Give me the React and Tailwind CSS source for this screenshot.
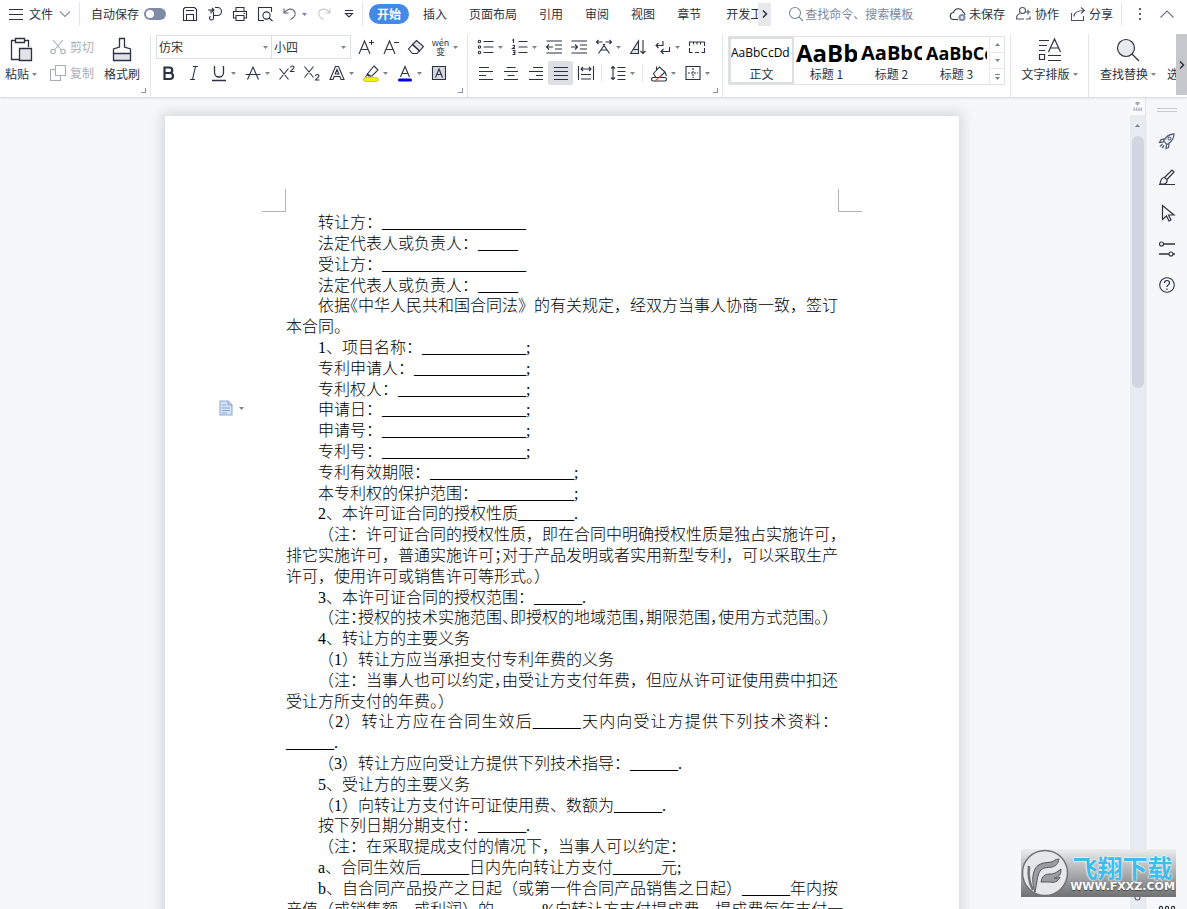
import { clsx } from 'clsx';

const MENU_TABS = ['插入', '页面布局', '引用', '审阅', '视图', '章节'];

const STYLES = [
  { sample: 'AaBbCcDd', label: '正文', cls: 'text-[12px]', active: true },
  { sample: 'AaBb', label: '标题 1', cls: 'text-[24px] font-bold' },
  { sample: 'AaBbC', label: '标题 2', cls: 'text-[20px] font-bold' },
  { sample: 'AaBbCc', label: '标题 3', cls: 'text-[18px] font-bold' },
];

// "~" marks a punctuation sign that is set half width, indent: false continues the paragraph
const LINES = [
  { text: '转让方：__________________' },
  { text: '法定代表人或负责人：_____' },
  { text: '受让方：__________________' },
  { text: '法定代表人或负责人：_____' },
  { text: '依据~《中华人民共和国合同法》的有关规定，经双方当事人协商一致，签订' },
  { text: '本合同。', indent: false },
  { text: '1、项目名称：_____________;' },
  { text: '专利申请人：______________;' },
  { text: '专利权人：________________;' },
  { text: '申请日：__________________;' },
  { text: '申请号：__________________;' },
  { text: '专利号：__________________;' },
  { text: '专利有效期限：__________________;' },
  { text: '本专利权的保护范围：____________;' },
  { text: '2、本许可证合同的授权性质_______.' },
  { text: '（注：许可证合同的授权性质，即在合同中明确授权性质是独占实施许可，' },
  { text: '排它实施许可，普通实施许可~；对于产品发明或者实用新型专利，可以采取生产', indent: false },
  { text: '许可，使用许可或销售许可等形式~。）', indent: false },
  { text: '3、本许可证合同的授权范围：______.' },
  { text: '（注~：授权的技术实施范围~、即授权的地域范围~，期限范围~，使用方式范围~。）' },
  { text: '4、转让方的主要义务' },
  { text: '（1）转让方应当承担支付专利年费的义务' },
  { text: '（注：当事人也可以约定~，由受让方支付年费，但应从许可证使用费中扣还' },
  { text: '受让方所支付的年费~。）', indent: false },
  { text: '（2）转让方应在合同生效后______天内向受让方提供下列技术资料：', justify: true },
  { text: '______.', indent: false },
  { text: '（3）转让方应向受让方提供下列技术指导：______.' },
  { text: '5、受让方的主要义务' },
  { text: '（1）向转让方支付许可证使用费、数额为______.' },
  { text: '按下列日期分期支付：______.' },
  { text: '（注：在采取提成支付的情况下，当事人可以约定：' },
  { text: 'a、合同生效后______日内先向转让方支付______元;' },
  { text: 'b、自合同产品投产之日起（或第一件合同产品销售之日起）______年内按' },
  { text: '产值（或销售额、或利润）的______%向转让方支付提成费，提成费每年支付一', indent: false },
  { text: '次。', indent: false },
];

function Svg({ w = 18, h = 18, className, children }) {
  return (
    <svg
      width={w}
      height={h}
      viewBox={`0 0 ${w} ${h}`}
      fill="none"
      stroke="currentColor"
      strokeWidth="1.1"
      className={clsx('shrink-0', className)}
      aria-hidden="true"
    >
      {children}
    </svg>
  );
}

function Caret({ className }) {
  return (
    <svg width="5" height="3" viewBox="0 0 5 3" className={clsx('shrink-0 fill-[#7c8494]', className)} aria-hidden="true">
      <path d="M0 0h5L2.5 3z" />
    </svg>
  );
}

function Divider({ className }) {
  return <span className={clsx('w-px shrink-0 bg-[#e3e5e8]', className)} />;
}

function Tool({ label, caret, active, children }) {
  return (
    <button title={label} aria-label={label} className="flex h-6 shrink-0 items-center">
      <span className={clsx('flex h-6 w-[25px] items-center justify-center', active && 'rounded-xs bg-[#dcdfe4]')}>
        {children}
      </span>
      {caret && <span className="flex w-[9px]"><Caret /></span>}
    </button>
  );
}

function Corner() {
  return (
    <span className="absolute right-1 bottom-1 size-[5px] border-r border-b border-[#8a93a5]" />
  );
}

/* ── Top bar ── */
function TopBar() {
  return (
    <div className="flex h-7 shrink-0 items-center text-[12px]">
      <button className="flex items-center pl-2">
        <Svg w={16} h={16} className="mr-[5px]"><path d="M1 3.5h14M1 8.500h14M1 13.500h14" /></Svg>
        文件
        <Svg w={12} h={8} className="ml-1.5 text-[#8a8f99]"><path d="M1 1.5l5 5 5-5" /></Svg>
      </button>
      <Divider className="ml-2 h-6" />
      <label className="ml-[11px] flex items-center gap-[5px] whitespace-nowrap">
        自动保存
        <input type="checkbox" role="switch" className="peer sr-only" />
        <span className="flex h-3 w-[22px] items-center rounded-full bg-[#7f8aa5] px-0.5">
          <span className="size-2 rounded-full bg-white" />
        </span>
      </label>
      <div className="ml-[11px] flex items-center">
        <Tool label="保存">
          <Svg><path d="M2.5 4v11.500h13V4.500L13.500 2.500H4L2.500 4zM5 5.500h8M5.500 15.500V9.500h7v6" /></Svg>
        </Tool>
        <Tool label="输出为PDF">
          <Svg><path d="M2 5h6M6 3l2 2-2 2M5 8.500V5M9 2.500h2.500a4 4 0 0 1 0 8H7.500M7.500 7v6a2 2 0 1 1-3-1.700" /></Svg>
        </Tool>
        <Tool label="打印">
          <Svg><path d="M5 6V2.500h8V6M5 13H2.500V6.500h13V13H13M5 10.500h8v5H5zM12.500 8.500h1.500" /></Svg>
        </Tool>
        <Tool label="打印预览">
          <Svg><path d="M8 15.500H2.500v-13h13V7M13 13l3.500 3" /><circle cx="10.500" cy="10.500" r="3.600" /></Svg>
        </Tool>
        <Tool label="撤销" caret>
          <Svg className="text-[#5c6478]"><path d="M3 3.500v4.500h4.500M3 8c3-4 7.500-5 10-2.500s1.500 7-3.500 9" /></Svg>
        </Tool>
        <Tool label="恢复">
          <Svg className="text-[#c3c6cc]"><path d="M15 3.500v4.500h-4.500M15 8c-3-4-7.500-5-10-2.500s-1.500 7 3.500 9" /></Svg>
        </Tool>
        <Tool label="自定义快速访问工具栏">
          <Svg w={10} h={10}><path d="M1 1.500h8M1.500 4.500h7L5 8z" /></Svg>
        </Tool>
      </div>
      <Divider className="ml-px h-6" />
      <nav className="ml-1.5 flex min-w-0 items-center whitespace-nowrap">
        <button className="mr-[3px] h-5 rounded-full bg-[#4389e8] px-2 font-bold text-white">开始</button>
        {MENU_TABS.map((tab) => (
          <button key={tab} className="px-[11px]">{tab}</button>
        ))}
        <button className="ml-3.5 w-8 shrink-0 overflow-hidden text-left">开发工具</button>
        <button aria-label="更多选项卡" className="flex h-[23px] w-[13px] items-center justify-center bg-[#e6e8ec]">
          <Svg w={6} h={10} className="text-[#2b3242]"><path d="M1 1.500l3.500 3.500L1 8.500" strokeWidth="1.500" /></Svg>
        </button>
      </nav>
      <label className="ml-4 flex min-w-0 flex-1 items-center text-[#7c879c]">
        <Svg w={18} h={18}><circle cx="8" cy="8" r="5.500" /><path d="M12 12l4 4" /></Svg>
        <input
          type="text"
          aria-label="查找命令、搜索模板"
          placeholder="查找命令、搜索模板"
          className="w-full min-w-0 bg-transparent outline-none placeholder:text-[#7c879c]"
        />
      </label>
      <div className="flex shrink-0 items-center gap-2.5 whitespace-nowrap">
        <button className="flex items-center gap-0.5">
          <Svg>
            <path d="M9 14.500H5a3.500 3.500 0 0 1-.5-7 5 5 0 0 1 9.500-.5 3.500 3.500 0 0 1 2 3" />
            <circle cx="13" cy="12.500" r="3.500" fill="#7f8aa5" stroke="none" />
            <path d="M11.800 11.300l2.400 2.400M14.200 11.300l-2.400 2.400" stroke="#fff" />
          </Svg>
          未保存
        </button>
        <button className="flex items-center gap-0.5">
          <Svg className="text-[#4b5366]"><circle cx="7.500" cy="5.500" r="3" /><path d="M5 8.500c-2 .5-3.500 2-3.500 5.500H9M13 4.500v5M10.500 7h5M11 14h4v-2.500" /></Svg>
          协作
        </button>
        <button className="flex items-center gap-0.5">
          <Svg className="text-[#4b5366]"><path d="M2.500 8v7.500h12V11M5 11.500c0-4 3-6 10.500-6M12 2.500l3.500 3-3.500 3" /></Svg>
          分享
        </button>
      </div>
      <Divider className="ml-2 h-6" />
      <button aria-label="更多" className="ml-4">
        <Svg w={4} h={14}><path d="M2 1v2M2 6v2M2 11v2" strokeWidth="1.500" /></Svg>
      </button>
      <button aria-label="收起功能区" className="mr-3 ml-[17px] text-[#6a7180]">
        <Svg w={16} h={10}><path d="M1.500 8.500L8 2l6.500 6.500" /></Svg>
      </button>
    </div>
  );
}

/* ── Ribbon groups ── */
function ClipboardGroup() {
  return (
    <div className="relative flex w-[150px] shrink-0">
      <button className="flex flex-col items-center self-start pt-[3px] pl-[5px]">
        <Svg w={26} h={26}>
          <path d="M7.500 3.500h-4v19H11M16.500 3.500h4V10" strokeWidth="1.300" />
          <path d="M7.500 1.500h9v4h-9z" strokeWidth="1.300" />
          <path d="M11.500 11.500h12v12h-12z" fill="#e1e3e8" strokeWidth="1.300" />
        </Svg>
        <span className="mt-0.5 flex items-center gap-[3px]">粘贴<Caret /></span>
      </button>
      <div className="ml-3 flex flex-col gap-[2px] pt-px text-[#a9adb5]">
        <button className="flex h-6 items-center gap-[3px]">
          <Svg>
            <path d="M4 2l8.500 10M14 2L5.500 12" />
            <circle cx="4" cy="13.500" r="2.200" /><circle cx="14" cy="13.500" r="2.200" />
          </Svg>
          剪切
        </button>
        <button className="flex h-6 items-center gap-[3px]">
          <Svg><path d="M6.500 1.500h10v10h-10zM6.500 5.500h-5v11h10v-5" /></Svg>
          复制
        </button>
      </div>
      <button className="ml-2.5 flex flex-col items-center self-start pt-[3px]">
        <Svg w={26} h={26}>
          <path d="M4.500 16.500h17v7h-17z" fill="#e1e3e8" strokeWidth="1.300" />
          <path d="M4.500 16.500v-4.500l6-2V1.500h5V10l6 2v4.500" strokeWidth="1.300" />
        </Svg>
        <span className="mt-0.5">格式刷</span>
      </button>
      <Corner />
    </div>
  );
}

function FontGroup() {
  return (
    <div className="relative flex w-[316px] shrink-0 flex-col pt-px pl-[5px]">
      <div className="flex items-center">
        <div className="mr-0.5 flex h-6 border border-[#dcdfe3]">
          <label className="relative flex items-center">
            <select aria-label="字体" className="h-full w-[115px] appearance-none border-r border-[#dcdfe3] pl-0.5 outline-none">
              <option>仿宋</option>
            </select>
            <Caret className="absolute right-1" />
          </label>
          <label className="relative flex items-center">
            <select aria-label="字号" className="h-full w-[78px] appearance-none pl-0.5 outline-none">
              <option>小四</option>
            </select>
            <Caret className="absolute right-1" />
          </label>
        </div>
        <Tool label="增大字号">
          <Svg><path d="M2 16L7.500 3l5.500 13M4 11.500h7M12 4.500h5M14.500 2v5" /></Svg>
        </Tool>
        <Tool label="减小字号">
          <Svg><path d="M2 16L7.500 3l5.500 13M4 11.500h7M12 4.500h5" /></Svg>
        </Tool>
        <Tool label="清除格式">
          <Svg>
            <path d="M5.500 6.500L9.500 2.500l7 6-4 4.500z" fill="#e1e3e8" />
            <path d="M5.500 6.500l7 6.500-2.500 2.500H5.500L1.500 11z" />
          </Svg>
        </Tool>
        <Tool label="拼音指南" caret>
          <span className="flex flex-col items-center text-[9px] leading-[9px]"><span>wén</span><span>变</span></span>
        </Tool>
      </div>
      <div className="mt-0.5 flex items-center">
        <Tool label="加粗">
          <Svg><path d="M4.500 3.500h5a2.600 2.600 0 0 1 0 5.500h-5zM4.500 9h5.500a3 3 0 0 1 0 6H4.500z" strokeWidth="2.200" /></Svg>
        </Tool>
        <Tool label="倾斜">
          <Svg><path d="M8 2.500h5M5 15.500h5M10.500 2.500l-3 13" /></Svg>
        </Tool>
        <Tool label="下划线" caret>
          <Svg><path d="M4.500 2v6.500a4.500 4.500 0 0 0 9 0V2M2 16.500h14" strokeWidth="1.300" /></Svg>
        </Tool>
        <Tool label="删除线" caret>
          <Svg><path d="M3.500 15.500L9 3l5.500 12.500M1.500 10.500h15" /></Svg>
        </Tool>
        <Tool label="上标">
          <Svg><path d="M1.500 4.500l9 11M10.500 4.500l-9 11M12.500 3.500c.5-2 3.500-1.800 3.500 0 0 1.500-2.500 2-3.500 4H16.500" /></Svg>
        </Tool>
        <Tool label="下标">
          <Svg><path d="M1.500 2.500l9 11M10.500 2.500l-9 11M12.500 12c.5-2 3.500-1.800 3.500 0 0 1.500-2.500 2-3.500 4H16.500" /></Svg>
        </Tool>
        <Tool label="文字效果" caret>
          <Svg><path d="M2 15.500L7.500 2.500h3L16 15.500h-3l-1.200-3H6.200L5 15.500zM7.200 10h3.600L9 5.500z" /></Svg>
        </Tool>
        <Tool label="突出显示" caret>
          <Svg>
            <path d="M12 2l4 4-6 6H6.500L5 10.500 12 2zM5 9.500l4 3M5 11l-1.500 2" />
            <rect x="1.500" y="13.500" width="15" height="4" rx="2" fill="#f8ee00" stroke="#b9b54a" strokeWidth=".7" />
          </Svg>
        </Tool>
        <Tool label="字体颜色" caret>
          <Svg><path d="M4.500 13L9 2.500 13.500 13M6 9.500h6" /><rect x="2" y="14.500" width="14" height="3" rx="1.500" fill="#0000e0" stroke="none" /></Svg>
        </Tool>
        <Tool label="字符底纹">
          <Svg><path d="M2.500 2.500h13v13h-13z" fill="#d5d8de" /><path d="M5.500 13.500L9 5l3.500 8.500M6.500 10.500h5" /></Svg>
        </Tool>
      </div>
      <Corner />
    </div>
  );
}

function ParagraphGroup() {
  return (
    <div className="relative flex w-[254px] shrink-0 flex-col pt-px pl-[5px]">
      <div className="flex items-center">
        <Tool label="项目符号" caret>
          <Svg><path d="M6.500 3.500h10M6.500 9h10M6.500 14.500h10" /><circle cx="2.500" cy="3.500" r="1.200" /><circle cx="2.500" cy="9" r="1.200" /><circle cx="2.500" cy="14.500" r="1.200" /></Svg>
        </Tool>
        <Tool label="编号" caret>
          <Svg><path d="M7.500 3.500h9M7.500 9h9M7.500 14.500h9M1.500 2.500l1-1V5M1.500 7.500h2V9L1.500 10.500h2.500M1.500 12.500h2.300v4H1.500M2 14.500h1.500" /></Svg>
        </Tool>
        <Tool label="减少缩进量">
          <Svg><path d="M1.500 3h15.500M10 7h7M10 11h7M1.500 15h15.500M8 9H1.500M4 6.500L1.500 9 4 11.500" /></Svg>
        </Tool>
        <Tool label="增加缩进量">
          <Svg><path d="M1.500 3h15.500M10 7h7M10 11h7M1.500 15h15.500M1 9h6.500M5 6.500L7.500 9 5 11.500" /></Svg>
        </Tool>
        <Tool label="中文版式" caret>
          <Svg><path d="M3.500 15.500L10 6M14.500 15.500L8 6M6 12h6M1.500 4h6M10.500 4h6M3.500 2l-2 2 2 2M14.500 2l2 2-2 2" /></Svg>
        </Tool>
        <Tool label="排序">
          <Svg><path d="M1.500 15.500L9.500 3v12.500z" fill="#e1e3e8" /><path d="M4 11.500h5.500M14 2v13.500M11.500 13l2.500 2.500 2.500-2.500" /></Svg>
        </Tool>
        <Tool label="换行" caret>
          <Svg><path d="M2 7.500h7V3M4.500 5L2 7.500 4.500 10M15.500 9v4.500H7M9.500 11L7 13.500 9.500 16" /></Svg>
        </Tool>
        <Tool label="制表位">
          <Svg><path d="M1.500 8V4h15v4M5.500 4v2.500M9 4v2.500M12.500 4v2.500M1.500 10v4.500h3M7 14.500h4M13.500 14.500h3V10" /></Svg>
        </Tool>
      </div>
      <div className="mt-0.5 flex items-center">
        <Tool label="左对齐"><Svg><path d="M2 3.500h10M2 7.500h14M2 11.500h7M2 15.500h14" /></Svg></Tool>
        <Tool label="居中对齐"><Svg><path d="M4.500 3.500h9M2 7.500h14M5.500 11.500h7M2 15.500h14" /></Svg></Tool>
        <Tool label="右对齐"><Svg><path d="M6 3.500h10M2 7.500h14M9 11.500h7M2 15.500h14" /></Svg></Tool>
        <Tool label="两端对齐" active><Svg><path d="M2 3.500h14M2 7.500h14M2 11.500h14M2 15.500h14" /></Svg></Tool>
        <Tool label="分散对齐">
          <Svg><path d="M1.500 2v14M16.500 2v14M4 5h10M6 3L4 5l2 2M12 3l2 2-2 2M4 10.500h10M4 15h10" /></Svg>
        </Tool>
        <Divider className="mx-[3px] h-[18px]" />
        <Tool label="行距" caret>
          <Svg><path d="M8.500 3.500h8M8.500 7.500h8M8.500 11.500h8M8.500 15.500h8M4 2.500v13M2 4.500l2-2 2 2M2 13.500l2 2 2-2" /></Svg>
        </Tool>
        <Divider className="mx-[3px] h-[18px]" />
        <Tool label="底纹颜色" caret>
          <Svg>
            <path d="M3.500 9.500l6-6.500 5.500 5-5.500 5.500H6zM6.500 6.500V2.500M15 8l1.500 4" />
            <rect x="1.500" y="13.500" width="15" height="3.500" rx="1.700" fill="#fff" />
            <path d="M5 17l7-6" stroke="#e0453a" />
          </Svg>
        </Tool>
        <Tool label="边框" caret>
          <Svg><path d="M2 2.500h14v13H2z" /><path d="M9 4v10M4 9h10" strokeDasharray="2 1" /></Svg>
        </Tool>
      </div>
      <Corner />
    </div>
  );
}

function StyleGallery() {
  return (
    <div className="mx-[5px] mt-0.5 flex h-[49px] w-[277px] shrink-0 border border-[#e0e2e6]">
      {STYLES.map((s) => (
        <button
          key={s.label}
          className={clsx(
            'flex h-full w-[65px] shrink-0 flex-col overflow-hidden border-2 text-left',
            s.active ? 'border-[#dcdee2]' : 'border-transparent',
          )}
        >
          <span className={clsx("block h-7 w-full overflow-hidden font-['Open_Sans',sans-serif] leading-7 text-black", s.cls)}>
            {s.sample}
          </span>
          <span className="block w-full text-center leading-4">{s.label}</span>
        </button>
      ))}
      <div className="flex flex-1 flex-col border-l border-[#e8eaed]">
        <button aria-label="上一行" className="flex flex-1 items-center justify-center"><Caret className="rotate-180" /></button>
        <button aria-label="下一行" className="flex flex-1 items-center justify-center border-y border-[#e8eaed]"><Caret /></button>
        <button aria-label="更多样式" className="flex flex-1 flex-col items-center justify-center gap-0.5">
          <span className="h-px w-[5px] bg-[#7c8494]" />
          <Caret />
        </button>
      </div>
    </div>
  );
}

function Ribbon() {
  return (
    <div className="flex h-[63px] shrink-0 text-[12px] whitespace-nowrap">
      <ClipboardGroup />
      <Divider />
      <FontGroup />
      <Divider />
      <ParagraphGroup />
      <Divider />
      <StyleGallery />
      <Divider />
      <button className="flex w-[77px] shrink-0 flex-col items-center self-start pt-[3px]">
        <Svg w={26} h={26}>
          <path d="M2 3.500h10M2 8.500h8M2 13.500h6M2.500 17.500h5v5h-5zM11 18.500h13M11 23.500h13M11.500 15L17.500 2l6 13M13.500 11h8" strokeWidth="1.200" />
        </Svg>
        <span className="mt-0.5 flex items-center gap-[3px]">文字排版<Caret /></span>
      </button>
      <Divider />
      <button className="flex w-[78px] shrink-0 flex-col items-center self-start pt-[3px]">
        <Svg w={26} h={26}>
          <circle cx="11" cy="11" r="8.500" fill="#e8eaee" strokeWidth="1.200" />
          <path d="M17 17l7 7" strokeWidth="1.300" />
        </Svg>
        <span className="mt-0.5 flex items-center gap-[3px]">查找替换<Caret /></span>
      </button>
      <button className="flex w-2 min-w-0 flex-1 items-start overflow-hidden pt-[31px]">选择</button>
      <button aria-label="向右滚动" className="mb-0.5 flex w-[11px] shrink-0 items-center justify-center bg-[#c5c7cc]">
        <Svg w={6} h={10}><path d="M1 1.500l3.500 3.500L1 8.500" strokeWidth="1.500" /></Svg>
      </button>
    </div>
  );
}

/* ── Document ── */
function LineText({ text }) {
  return text.split(/(~.)/).map((part, i) => (
    part.startsWith('~')
      ? <span key={i} className="[font-feature-settings:'halt']">{part.slice(1)}</span>
      : part
  ));
}

function Paper() {
  return (
    <article className="relative mt-[19px] w-[794px] shrink-0 self-start bg-white pt-[73px] pb-24 shadow-[0_0_12px_4px_rgba(0,0,0,0.12)]">
      <div className="flex justify-between px-[97px]">
        <span className="h-[23px] w-6 border-r border-b border-[#b5b5b5]" />
        <span className="h-[23px] w-6 border-b border-l border-[#b5b5b5]" />
      </div>
      <div className="px-[121px] font-['Liberation_Serif','Noto_Sans_CJK_SC',serif] text-[16px] font-light whitespace-nowrap text-black [text-spacing-trim:space-all]">
        {LINES.map((line, i) => (
          <p
            key={i}
            className={clsx(
              'leading-[21px] nth-[5n]:leading-5',
              line.indent !== false && 'pl-8',
              line.justify && 'text-justify [text-align-last:justify]',
            )}
          >
            <LineText text={line.text} />
          </p>
        ))}
      </div>
      <button aria-label="段落布局" className="absolute top-[284px] left-[54px] flex items-center gap-1.5">
        <Svg w={14} h={16} className="text-[#8ea9d6]">
          <path d="M1 1h8l4 4v10H1z" fill="#d5e1f4" /><path d="M9 1v4h4M3 5h4M3 8h8M3 10.500h8M3 13h5" />
        </Svg>
        <Caret />
      </button>
    </article>
  );
}

function ScrollBar() {
  return (
    <div className="flex w-[15px] shrink-0 flex-col items-center bg-[#e9ebf2]">
      <button aria-label="标尺" className="flex h-[18px] w-full items-center justify-center bg-[#f8f9fb] text-[#a3abbb]">
        <Svg w={9} h={9}><path d="M2.500 0h4v2l-2 1.500-2-1.500z" fill="currentColor" stroke="none" /><path d="M1 8.500v-3M3.500 8.500v-3M6 8.500v-3M8.500 8.500v-3M1 8h7.500" /></Svg>
      </button>
      <button aria-label="向上滚动" className="flex h-[21px] items-center"><Caret className="rotate-180" /></button>
      <span className="h-[252px] w-3 rounded-full bg-[#d3d6e0]" />
      <button aria-label="选择浏览对象" className="mt-auto mb-2 text-[#59647c]">
        <Svg w={7} h={7}><circle cx="3.500" cy="3.500" r="2.500" /></Svg>
      </button>
    </div>
  );
}

function SideBar() {
  return (
    <aside className="flex w-[42px] shrink-0 flex-col items-center border-l border-[#e0e3ea] pt-[11px] text-[#2b3242]">
      <span className="mb-5 h-1 w-5 border-y border-[#c6c9cf]" />
      <div className="flex flex-1 flex-col gap-[18px]">
        <button aria-label="新手指引" className="text-[#59647c]">
          <Svg>
            <path d="M5.500 9C8 4.500 11.500 2 16 2c0 4.500-2.500 8-7 10.500zM6.500 7L3 7.500 1.500 10.500l4-.5M11 11.500l-.5 4L8 16.500l.5-4M4.500 12L2 14.500M6 13.500L4 16" strokeWidth="1.300" />
            <circle cx="11.500" cy="6.500" r="1.500" />
          </Svg>
        </button>
        <button aria-label="样式">
          <Svg><path d="M6.500 9.500L14 2l2 2-7 7.500M6.500 9.500c-3 0-4 2.500-4.500 6.500h4c2.500-.5 3.500-2.500 3-4.500zM1 16.500h16" strokeWidth="1.200" /></Svg>
        </button>
        <button aria-label="选择">
          <Svg><path d="M4.500 1.500v14l4-3.500 2.500 5 2-1-2.500-5h5.500z" strokeWidth="1.200" /></Svg>
        </button>
        <button aria-label="属性">
          <Svg><circle cx="3.500" cy="4" r="2" /><path d="M5.500 4H17M1 14h10M15 14h2" strokeWidth="1.300" /><circle cx="13" cy="14" r="2" /></Svg>
        </button>
        <button aria-label="帮助">
          <Svg><circle cx="9" cy="9" r="7.300" /><path d="M6.500 7c0-3.500 5-3.200 5 0 0 1.800-2.500 2-2.500 4M9 12.500V14" strokeWidth="1.200" /></Svg>
        </button>
      </div>
      <button aria-label="更多" className="-mb-0.5">
        <Svg w={18} h={6}><circle cx="3" cy="3" r="1.600" /><circle cx="9" cy="3" r="1.600" /><circle cx="15" cy="3" r="1.600" /></Svg>
      </button>
    </aside>
  );
}

function SiteBadge() {
  return (
    <div className="absolute right-[11px] bottom-3 flex h-12 w-[155px] items-center bg-linear-to-b from-[#eceded] to-[#6f7173]">
      <svg width="48" height="48" viewBox="0 0 48 48" className="shrink-0" aria-hidden="true">
        <circle cx="24" cy="24" r="22.500" fill="#e6e7e8" stroke="#6f7377" strokeWidth="1.500" />
        <path d="M14 43c-3-8-3-17 0-23 4-7 11-6 16-7 3-.5 4-3 8-3-1 5-3 7-7 8-5 1-9 0-12 4-3 5-3 12-5 21z" fill="#9a9ea2" stroke="#54585c" />
        <path d="M20 33c1-6 4-8 9-8 4 0 6-1 11-5 0 6-2 8-7 9 2 1 4 0 6-1-2 5-6 6-10 5-4 0-6 0-9 0z" fill="#9a9ea2" stroke="#54585c" />
        <path d="M8 17c-1 9 0 17 4 24" fill="none" stroke="#6f7377" strokeWidth="2.500" />
      </svg>
      <div className="flex flex-1 flex-col items-center whitespace-nowrap text-white">
        <span className="text-[25px] leading-7 font-bold text-[#3dbdeb] [text-shadow:0_0_2px_#fff,0_0_2px_#fff]">飞翔下载</span>
        <span className="font-['DejaVu_Sans',sans-serif] text-[11px] leading-3 font-bold [text-shadow:0_1px_1px_#444]">WWW.FXXZ.COM</span>
      </div>
    </div>
  );
}

export default function App() {
  return (
    <div className="relative flex h-screen flex-col overflow-hidden bg-[#f5f7f9] font-['Noto_Sans_CJK_SC',sans-serif] text-[#2b3242]">
      <header className="z-10 flex flex-col gap-1.5 bg-white shadow-[0_1px_2px_rgba(0,0,0,0.15)]">
        <TopBar />
        <Ribbon />
      </header>
      <div className="flex min-h-0 flex-1">
        <main className="flex min-w-0 flex-1 justify-center overflow-hidden pr-1.5">
          <Paper />
        </main>
        <ScrollBar />
        <SideBar />
      </div>
      <SiteBadge />
    </div>
  );
}
